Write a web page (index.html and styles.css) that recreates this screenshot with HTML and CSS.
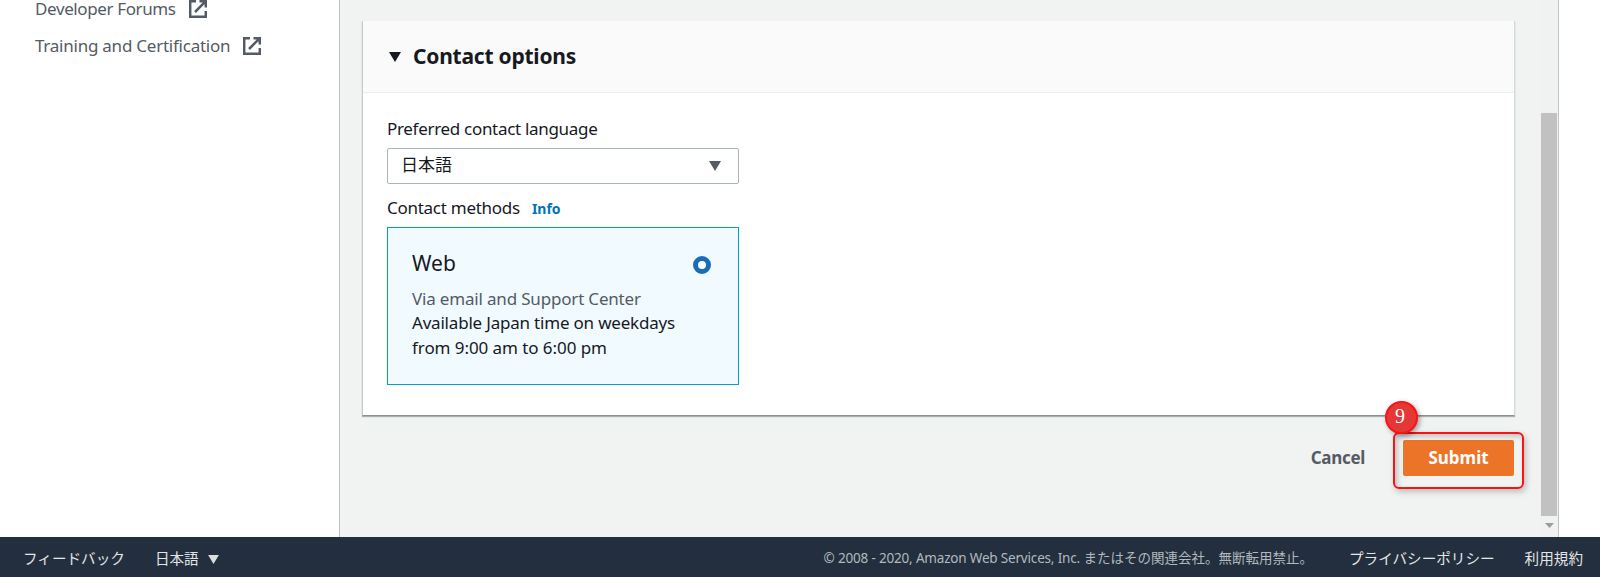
FILE: index.html
```html
<!DOCTYPE html>
<html lang="ja">
<head>
<meta charset="utf-8">
<title>Contact options</title>
<link rel="stylesheet" href="styles.css">
</head>
<body>
<div class="workspace">
  <nav class="sidebar">
    <a class="side-link"><span class="t-forums">Developer Forums</span>
      <svg class="external" viewBox="0 0 18 18"><path d="M7 1.2H1.2v15.6h15.6V11M10.5 1.2h6.3v6.3M16.3 1.7L6 12"/></svg></a>
    <a class="side-link"><span class="t-training">Training and Certification</span>
      <svg class="external" viewBox="0 0 18 18"><path d="M7 1.2H1.2v15.6h15.6V11M10.5 1.2h6.3v6.3M16.3 1.7L6 12"/></svg></a>
  </nav>
  <main class="main">
    <section class="card">
      <header class="card-header">
        <svg class="caret caret-dark" viewBox="0 0 12 10"><path d="M0 0h12L6 10z"/></svg>
        <h2 class="title">Contact options</h2>
      </header>
      <div class="card-body">
        <div class="label"><span class="t-language">Preferred contact language</span></div>
        <div class="select"><span>日本語</span>
          <svg class="caret caret-grey" viewBox="0 0 12 10"><path d="M0 0h12L6 10z"/></svg></div>
        <div class="label label-methods"><span class="t-methods">Contact methods</span><a class="info">Info</a></div>
        <div class="tile">
          <div class="tile-head"><span class="tile-title">Web</span><span class="radio"></span></div>
          <div class="tile-line muted"><span class="t-via">Via email and Support Center</span></div>
          <div class="tile-line"><span class="t-available">Available Japan time on weekdays</span></div>
          <div class="tile-line"><span class="t-hours">from 9:00 am to 6:00 pm</span></div>
        </div>
      </div>
    </section>
    <div class="actions">
      <button class="cancel">Cancel</button>
      <div class="submit-wrap">
        <button class="submit">Submit</button>
        <span class="highlight"></span>
        <span class="badge">9</span>
      </div>
    </div>
  </main>
  <div class="scrollbar">
    <div class="thumb"></div>
    <svg class="arrow" viewBox="0 0 9 5"><path d="M0 0h9L4.500 5z"/></svg>
  </div>
</div>
<footer class="footer">
  <span class="feedback">フィードバック</span>
  <span class="lang">日本語</span>
  <svg class="caret caret-light" viewBox="0 0 12 10"><path d="M0 0h12L6 10z"/></svg>
  <span class="copyright"><span class="t-copy">© 2008 - 2020, Amazon Web Services, Inc.</span> <span class="t-rights">またはその関連会社。無断転用禁止。</span></span>
  <span class="privacy">プライバシーポリシー</span>
  <span class="terms">利用規約</span>
</footer>
</body>
</html>
```

FILE: styles.css
```css
* { box-sizing: border-box; }
body {
  margin: 0;
  width: 1600px;
  height: 577px;
  overflow: hidden;
  background: #fff;
  color: #16191f;
  font: 17px/24px "Noto Sans", "Noto Sans CJK JP", sans-serif;
  white-space: nowrap;
}
.workspace { display: flex; height: 537px; }
.sidebar {
  width: 340px;
  padding: 0 0 0 35px;
  border-right: 1px solid #b9c2c3;
  color: #545b64;
}
.side-link { display: flex; align-items: center; height: 24px; margin-bottom: 13px; }
.side-link:first-child { margin-top: -3px; }
.external { width: 18px; height: 18px; margin-left: 13px; fill: none; stroke: #545b64; stroke-width: 2.5; }
.main { width: 1200px; padding: 21px 25px 0 22px; background: #f1f3f3; }
.card {
  height: 395px;
  background: #fff;
  border-left: 1px solid #c3cbcb;
  border-right: 1px solid #d5dbdb;
  border-bottom: 1px solid #879196;
  box-shadow: 0 1px 1px rgba(0, 28, 36, .3);
}
.card-header {
  display: flex;
  align-items: center;
  height: 72px;
  padding-left: 26px;
  background: #fafafa;
  border-bottom: 1px solid #eaeded;
}
.caret { display: block; width: 12px; height: 10px; }
.caret-dark { fill: #16191f; }
.caret-grey { fill: #545b64; }
.caret-light { width: 11px; height: 9px; fill: #ddd; }
.title { margin: -2px 0 0 12px; font-size: 21px; font-weight: 700; letter-spacing: -.23px; }
.t-forums { letter-spacing: -.38px; }
.t-training { letter-spacing: -.24px; }
.t-language { letter-spacing: -.31px; }
.t-methods { letter-spacing: -.27px; }
.t-via { letter-spacing: -.18px; }
.t-available { letter-spacing: -.2px; }
.t-hours { letter-spacing: -.07px; }
.t-copy { letter-spacing: -.18px; }
.card-body { padding: 24px 0 0 24px; }
.label { display: flex; height: 24px; }
.select {
  display: flex;
  align-items: center;
  justify-content: space-between;
  width: 352px;
  height: 36px;
  margin-top: 7px;
  padding: 0 17px 2px 13px;
  border: 1px solid #aab7b8;
  border-radius: 2px;
}
.select .caret { margin-top: 2px; }
.label-methods { margin-top: 12px; }
.info { margin-left: 12px; color: #0073bb; font-size: 14px; line-height: 26px; font-weight: 700; }
.tile {
  width: 352px;
  height: 158px;
  margin-top: 7px;
  padding: 20px 24px;
  border: 1px solid #00a1c9;
  background: #f1faff;
}
.tile-head { display: flex; justify-content: space-between; height: 39px; padding-right: 3px; }
.tile-title { font-size: 21px; line-height: 30px; }
.radio { width: 18px; height: 18px; margin-top: 8px; border: 5.500px solid #166eb9; border-radius: 50%; background: #fff; }
.tile-line { height: 24.300px; }
.muted { color: #545b64; }
.actions { display: flex; justify-content: flex-end; align-items: center; margin-top: 24px; height: 36px; }
button { padding: 0; border: 0; font: 700 17px/36px "Noto Sans", sans-serif; }
.cancel { margin-right: 38px; color: #545b64; background: none; letter-spacing: -.3px; }
.submit-wrap { position: relative; margin-right: 1px; }
.submit { display: block; width: 111px; height: 36px; border-radius: 2px; background: #ec7429; color: #fff; }
.highlight {
  position: absolute;
  inset: -8px -10px -13px -10px;
  border: 2px solid #fb1212;
  border-radius: 6px;
  box-shadow: 2px 3px 6px rgba(0, 0, 0, .22), inset 3px 3px 5px rgba(0, 0, 0, .18);
}
.badge {
  position: absolute;
  left: -18px;
  top: -39px;
  width: 33px;
  height: 33px;
  padding-right: 3px;
  border: 2px solid #fb1212;
  border-radius: 50%;
  background: #e63737;
  box-shadow: 2px 2px 5px rgba(0, 0, 0, .35);
  color: #fff;
  font: 20px/27px "Liberation Serif", serif;
  text-align: center;
}
.scrollbar {
  display: flex;
  flex-direction: column;
  align-items: center;
  width: 19px;
  padding-top: 113px;
  border-right: 1px solid #c1c4c4;
  background: #f0f1f1;
}
.thumb { width: 16px; height: 403px; background: #c1c1c1; }
.arrow { width: 9px; height: 5px; margin-top: 7px; fill: #9a9d9d; }
.footer {
  display: flex;
  align-items: center;
  height: 40px;
  padding: 2px 17px 0 23px;
  background: #232f3e;
  color: #e3e5e7;
  font-size: 14.600px;
}
.lang { margin-left: 30px; }
.footer .caret { margin: 2px 0 0 9px; }
.copyright { margin-left: auto; color: #b1b9bf; font-size: 13.500px; }
.privacy { margin-left: 36px; }
.terms { margin-left: 30px; }
```
